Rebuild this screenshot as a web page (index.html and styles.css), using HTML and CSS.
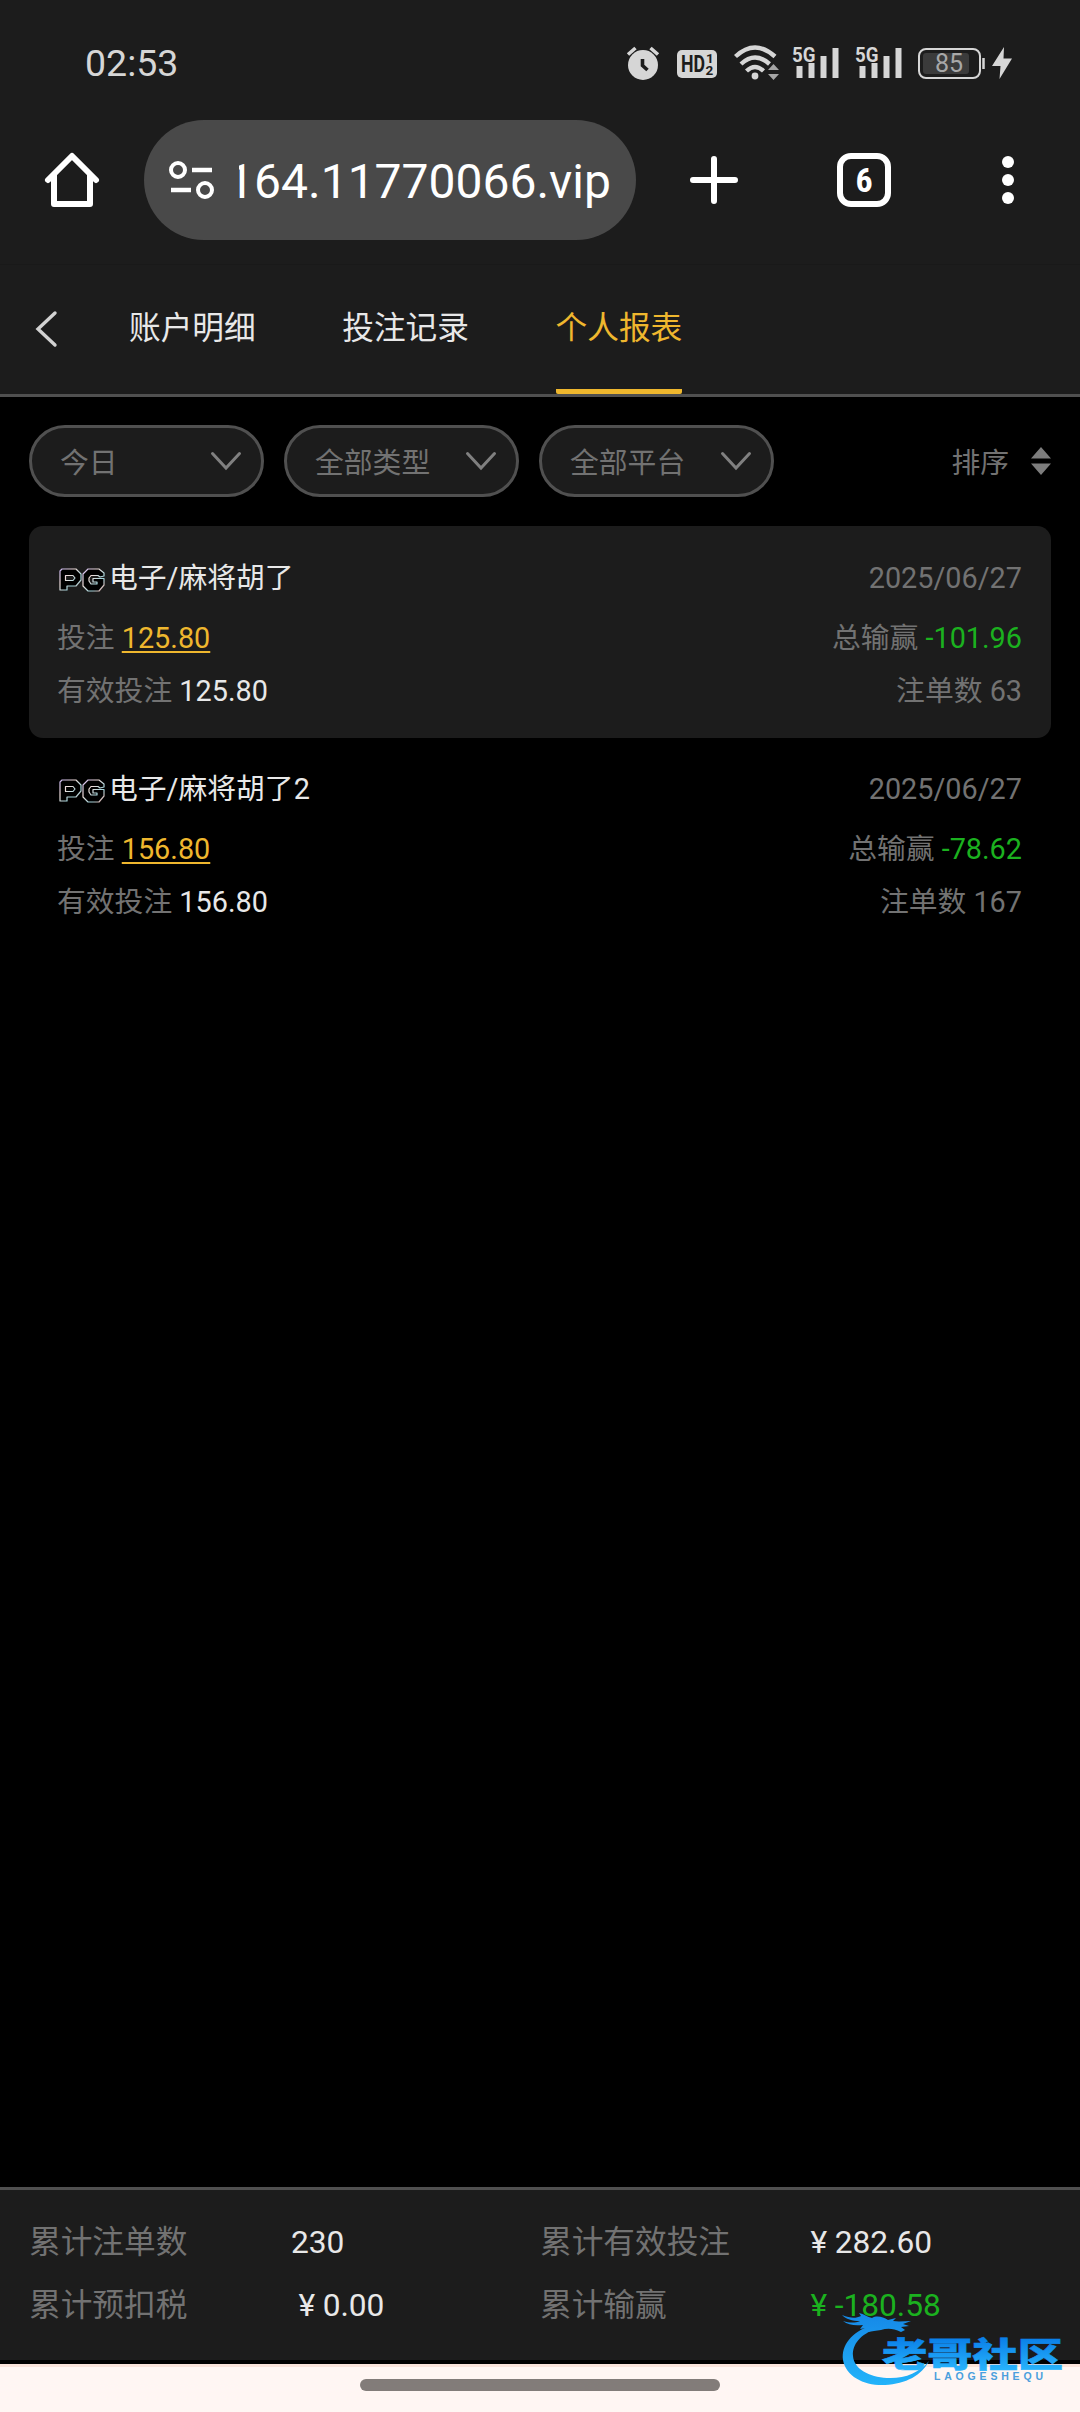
FILE: index.html
```html
<!DOCTYPE html>
<html lang="zh">

<head>
    <meta charset="UTF-8">
    <meta name="viewport" content="width=device-width, initial-scale=1.0">
    <title>个人报表</title>
    <link rel="stylesheet" href="styles.css">
</head>

<body>
    <!-- 状态栏 -->
    <div class="status-bar">
        <span class="time">02:53</span>
        <div class="status-icons">
            <svg width="34" height="34" viewBox="0 0 34 34">
                <circle cx="17" cy="19" r="15" fill="#d6d6d6"/>
                <path d="M2 8.500L9.500 2M24.500 2L32 8.500" stroke="#d6d6d6" stroke-width="3.600"/>
                <path d="M16.500 13v6.500l5 4.500" fill="none" stroke="#1d1d1d" stroke-width="3.600"/>
            </svg>
            <svg width="42" height="34" viewBox="0 0 42 34">
                <rect x="1" y="4" width="40" height="28" rx="5" fill="#d6d6d6"/>
                <text class="hd" x="5" y="26" textLength="24" lengthAdjust="spacingAndGlyphs">HD</text>
                <text class="hd-num" x="30" y="17">1</text>
                <text class="hd-num" x="29.500" y="28.500">2</text>
            </svg>
            <svg width="43" height="34" viewBox="0 0 43 34">
                <g fill="none" stroke="#d6d6d6" stroke-width="4.400">
                    <path d="M1.500 10.500Q21 -7.500 41 10.500"/>
                    <path d="M7 18Q21 5 35.500 18"/>
                    <path d="M12.500 25Q21 17 29.500 25"/>
                </g>
                <circle cx="21" cy="30" r="3.400" fill="#d6d6d6"/>
                <path d="M34 24l5.500-6 5.500 6zM34 28l5.500 6 5.500-6z" fill="#a5a5a5"/>
            </svg>
            <svg width="46" height="34" viewBox="0 0 46 34">
                <text class="net" x="-1" y="15.500" textLength="23.500" lengthAdjust="spacingAndGlyphs">5G</text>
                <path d="M3.500 20h6v12h-6zM15.500 17h6v15h-6zM27.500 10h6v22h-6zM39.500 2h6v30h-6z" fill="#d6d6d6"/>
            </svg>
            <svg width="46" height="34" viewBox="-1 0 46 34">
                <text class="net" x="-1" y="15.500" textLength="23.500" lengthAdjust="spacingAndGlyphs">5G</text>
                <path d="M3.500 20h6v12h-6zM15.500 17h6v15h-6zM27.500 10h6v22h-6zM39.500 2h6v30h-6z" fill="#d6d6d6"/>
            </svg>
            <svg width="95" height="34" viewBox="0 0 95 34">
                <rect x="2" y="3" width="61" height="29" rx="7" fill="none" stroke="#d6d6d6" stroke-width="2"/>
                <rect x="6" y="7" width="46" height="21" rx="3" fill="#3b3b3b"/>
                <path d="M66.500 12v11" stroke="#d6d6d6" stroke-width="2.500"/>
                <text class="battery" x="18" y="26">85</text>
                <path d="M87 1L75 20h8.500l-1 13L95 12.500h-8.500z" fill="#d6d6d6"/>
            </svg>
        </div>
    </div>

    <!-- 浏览器工具栏 -->
    <div class="toolbar">
        <svg class="home" width="54" height="54" viewBox="0 0 54 54">
            <path d="M3 27L27 3l24 24M9 22v29h36V22" fill="none" stroke="#fff" stroke-width="6" stroke-linecap="round" stroke-linejoin="round"/>
        </svg>
        <div class="address">
            <svg width="46" height="40" viewBox="0 0 46 40">
                <g fill="none" stroke="#fff">
                    <circle cx="9" cy="10" r="7" stroke-width="4"/>
                    <circle cx="36" cy="30" r="7" stroke-width="4"/>
                    <path d="M23 10h20M2 30h20" stroke-width="4.500"/>
                </g>
            </svg>
            <div class="url"><span>164.11770066.vip</span></div>
        </div>
        <svg class="plus" width="48" height="48" viewBox="0 0 48 48">
            <path d="M24 3v42M3 24h42" stroke="#fff" stroke-width="6" stroke-linecap="round"/>
        </svg>
        <div class="tab-count">6</div>
        <div class="more"><i></i><i></i><i></i></div>
    </div>

    <!-- 顶部标签 -->
    <div class="header">
        <svg class="back" width="24" height="36" viewBox="0 0 24 36">
            <path d="M21 2L4 18l17 16" fill="none" stroke="#d2d2d2" stroke-width="3.400" stroke-linecap="round"/>
        </svg>
        <div class="tab">账户明细</div>
        <div class="tab">投注记录</div>
        <div class="tab active">个人报表</div>
    </div>

    <div class="content">
        <div class="filters">
            <div class="select"><span>今日</span><svg width="30" height="18" viewBox="0 0 30 18"><path d="M1.500 1.500L15 16 28.500 1.500"/></svg></div>
            <div class="select"><span>全部类型</span><svg width="30" height="18" viewBox="0 0 30 18"><path d="M1.500 1.500L15 16 28.500 1.500"/></svg></div>
            <div class="select"><span>全部平台</span><svg width="30" height="18" viewBox="0 0 30 18"><path d="M1.500 1.500L15 16 28.500 1.500"/></svg></div>
            <div class="sort"><span>排序</span><svg width="20" height="30" viewBox="0 0 20 30"><path d="M0 12.500L10 1l10 11.500zM0 17.500L10 29l10-11.500z"/></svg></div>
        </div>

        <div class="card filled">
            <div class="row title">
                <div class="name"><svg class="pg" width="46" height="24" viewBox="0 0 46 24"><use href="#pg"/></svg>电子/麻将胡了</div>
                <span>2025/06/27</span>
            </div>
            <div class="row bet">
                <span>投注 <a class="link">125.80</a></span>
                <span>总输赢 <b class="green">-101.96</b></span>
            </div>
            <div class="row">
                <span>有效投注 <b>125.80</b></span>
                <span>注单数 63</span>
            </div>
        </div>

        <div class="card">
            <div class="row title">
                <div class="name"><svg class="pg" width="46" height="24" viewBox="0 0 46 24"><use href="#pg"/></svg>电子/麻将胡了2</div>
                <span>2025/06/27</span>
            </div>
            <div class="row bet">
                <span>投注 <a class="link">156.80</a></span>
                <span>总输赢 <b class="green">-78.62</b></span>
            </div>
            <div class="row">
                <span>有效投注 <b>156.80</b></span>
                <span>注单数 167</span>
            </div>
        </div>
    </div>

    <!-- 底部合计 -->
    <div class="summary">
        <span>累计注单数</span><b>230</b>
        <span>累计有效投注</span><b><i class="yuan">¥</i>282.60</b>
        <span>累计预扣税</span><b><i class="yuan">¥</i>0.00</b>
        <span>累计输赢</span><b class="green"><i class="yuan">¥</i>-180.58</b>
    </div>

    <div class="nav-bar"><div class="handle"></div></div>

    <svg class="watermark" width="240" height="80" viewBox="0 0 240 80">
        <defs>
            <linearGradient id="blue" gradientUnits="userSpaceOnUse" x1="0" y1="5" x2="0" y2="74">
                <stop offset="0" stop-color="#168ae8"/>
                <stop offset="1" stop-color="#23b4fa"/>
            </linearGradient>
            <linearGradient id="blue-text" gradientUnits="userSpaceOnUse" x1="0" y1="26" x2="0" y2="58">
                <stop offset="0" stop-color="#0a7fe8"/>
                <stop offset="1" stop-color="#27b3fc"/>
            </linearGradient>
            <linearGradient id="rim" x1="0" y1="0" x2="1" y2="1">
                <stop offset="0" stop-color="#c9b6ef"/>
                <stop offset=".35" stop-color="#f0ddd9"/>
                <stop offset=".7" stop-color="#9fd4dc"/>
                <stop offset="1" stop-color="#f0a9a0"/>
            </linearGradient>
            <g id="pg" fill="#000" stroke="url(#rim)" stroke-width="1.200" stroke-linejoin="round">
                <path d="M1 3l2-2h14l5 5v6l-5 6H8v4H1zM6.500 7.500v5H14l2-2.500-2-2.500z" fill-rule="evenodd"/>
                <path d="M29 1h11l5 4v3l-4 1-2-1.500h-7L30 10v3l2 3h6v-2h-4v-3.500h11V17l-5 6H29l-5-5V6z"/>
            </g>
        </defs>
        <g fill="url(#blue)">
            <path d="M38 14C20 20 9 33 11 48c3 17 22 26 42 25 21-1 37-10 44-24-10 12-25 18-42 17-18-1-33-9-34-22-1-12 8-22 23-27z"/>
            <path d="M10 3c8 3 13 4 19 1l-2-3c5 1 8 4 13 5 5-3 11-1 16 2l8-2-3 3c6 1 12 0 18 0l-8 3 6 2-8 1 4 3-4 2c-8-4-14-4-20-2l-7 1-6 1-6-1 4-3-6 1 3-4c-8 1-15 0-20-4 7 2 12 2 17 0-8 0-14-2-18-6z"/>
        </g>
        <text class="mark" x="50" y="55" textLength="181" lengthAdjust="spacingAndGlyphs">老哥社区</text>
        <text class="mark-en" x="102" y="68" textLength="109">LAOGESHEQU</text>
    </svg>
</body>

</html>
```

FILE: styles.css
```css
:root {
    --bar-bg: #1c1c1c;
    --line-color: #505050;
    --muted-color: #727272;
    --text-color: #e8e8e8;
    --primary-color: #efb72e;
    --green-color: #1bb11f;
}

* {
    margin: 0;
    padding: 0;
    box-sizing: border-box;
}

body {
    width: 1080px;
    height: 2412px;
    display: flex;
    flex-direction: column;
    position: relative;
    overflow: hidden;
    background: #000;
    color: var(--muted-color);
    font-family: Roboto, "Noto Sans CJK SC", sans-serif;
    font-size: 28.8px;
}

svg {
    display: block;
    flex: none;
    overflow: visible;
}

b {
    font-weight: 400;
    color: var(--text-color);
}

.status-bar {
    height: 120px;
    padding: 5px 68px 0 85px;
    display: flex;
    align-items: center;
    justify-content: space-between;
    background: var(--bar-bg);
}

.time {
    font-size: 37.5px;
    color: #d6d6d6;
}

.status-icons {
    display: flex;
    gap: 16px;
}

.hd {
    font: 700 23px Roboto, sans-serif;
    fill: #1c1c1c;
}

.hd-num {
    font: 700 13.5px Roboto, sans-serif;
    fill: #1c1c1c;
}

.net {
    font: 700 21px Roboto, sans-serif;
    fill: #d6d6d6;
}

.battery {
    font: 400 25px Roboto, sans-serif;
    fill: #a8a8a8;
}

.toolbar {
    height: 144px;
    padding: 0 66px 24px 45px;
    display: flex;
    align-items: center;
    background: var(--bar-bg);
}

.address {
    width: 492px;
    height: 120px;
    margin: 0 54px 0 45px;
    padding: 0 25px;
    display: flex;
    align-items: center;
    border-radius: 60px;
    background: #494949;
}

.url {
    flex: 1;
    height: 60px;
    margin-left: 24px;
    display: flex;
    justify-content: flex-end;
    overflow: hidden;
    line-height: 64px;
    font-size: 48px;
    color: #fff;
}

.tab-count {
    width: 54px;
    height: 54px;
    margin-left: 99px;
    border: 6px solid #fff;
    border-radius: 14px;
    text-align: center;
    line-height: 42px;
    font-family: "Roboto Condensed", Roboto, sans-serif;
    font-size: 34px;
    font-weight: 700;
    color: #fff;
}

.more {
    margin-left: auto;
    display: flex;
    flex-direction: column;
    gap: 6px;
}

.more i {
    width: 12px;
    height: 12px;
    border-radius: 50%;
    background: #fff;
}

.header {
    height: 133px;
    padding-left: 34px;
    display: flex;
    background: var(--bar-bg);
    border-top: 1px solid #191919;
    border-bottom: 3px solid var(--line-color);
}

.back {
    margin: 46px 71px 0 0;
}

.tab {
    height: 129px;
    margin-right: 86.6px;
    line-height: 127px;
    font-size: 31.68px;
    color: var(--text-color);
}

.tab.active {
    color: var(--primary-color);
    border-bottom: 5px solid var(--primary-color);
    border-radius: 2px;
}

.content {
    flex: 1;
    padding: 28px 29px 0;
}

.filters {
    height: 72px;
    margin-bottom: 29px;
    display: flex;
    gap: 20px;
}

.filters span {
    padding-bottom: 2px;
}

.select {
    width: 235px;
    padding: 0 20px 0 28px;
    display: flex;
    align-items: center;
    justify-content: space-between;
    border: 3px solid var(--line-color);
    border-radius: 36px;
    background: var(--bar-bg);
}

.select path {
    fill: none;
    stroke: #808080;
    stroke-width: 3;
    stroke-linecap: round;
}

.sort {
    margin-left: auto;
    display: flex;
    align-items: center;
    gap: 22px;
}

.sort path {
    fill: #7d7d7d;
}

.card {
    height: 212px;
    padding: 25px 29px 0 28px;
    border-radius: 14px;
}

.card.filled {
    padding-top: 26px;
    background: var(--bar-bg);
}

.row {
    height: 52px;
    display: flex;
    justify-content: space-between;
    line-height: 52px;
}

.row.bet {
    height: 53px;
    margin-top: 8px;
}

.name {
    display: flex;
    color: var(--text-color);
}

.pg {
    margin: 16px 4px 0 2px;
}

.link {
    color: var(--primary-color);
    text-decoration: underline;
    text-decoration-thickness: 2px;
    text-underline-offset: 3px;
}

.summary {
    height: 173px;
    padding: 21px 0 0 29px;
    display: grid;
    grid-template-columns: 262px 249px 263px 1fr;
    grid-auto-rows: 63px;
    line-height: 63px;
    font-size: 31.68px;
    background: var(--bar-bg);
    border-top: 3px solid var(--line-color);
}

.yuan {
    display: inline-block;
    width: 31.68px;
    text-align: center;
    font-style: normal;
}

.green,
.summary .green {
    color: var(--green-color);
}

.nav-bar {
    height: 48px;
    margin-top: 4px;
    padding-top: 12px;
    background: #fff6f3;
    border-top: 3px solid #f9e3da;
}

.handle {
    width: 360px;
    height: 12px;
    margin: 0 auto;
    border-radius: 6px;
    background: #827c79;
}

/* 社区水印，浮在页面右下角 */
.watermark {
    position: absolute;
    left: 832px;
    top: 2312px;
}

.mark {
    font: 900 34px "Noto Sans CJK SC", sans-serif;
    fill: url(#blue-text);
    stroke: url(#blue-text);
    stroke-width: .6px;
}

.mark-en {
    font: 700 10.5px "Liberation Sans", sans-serif;
    fill: #4b9fdd;
}
```
